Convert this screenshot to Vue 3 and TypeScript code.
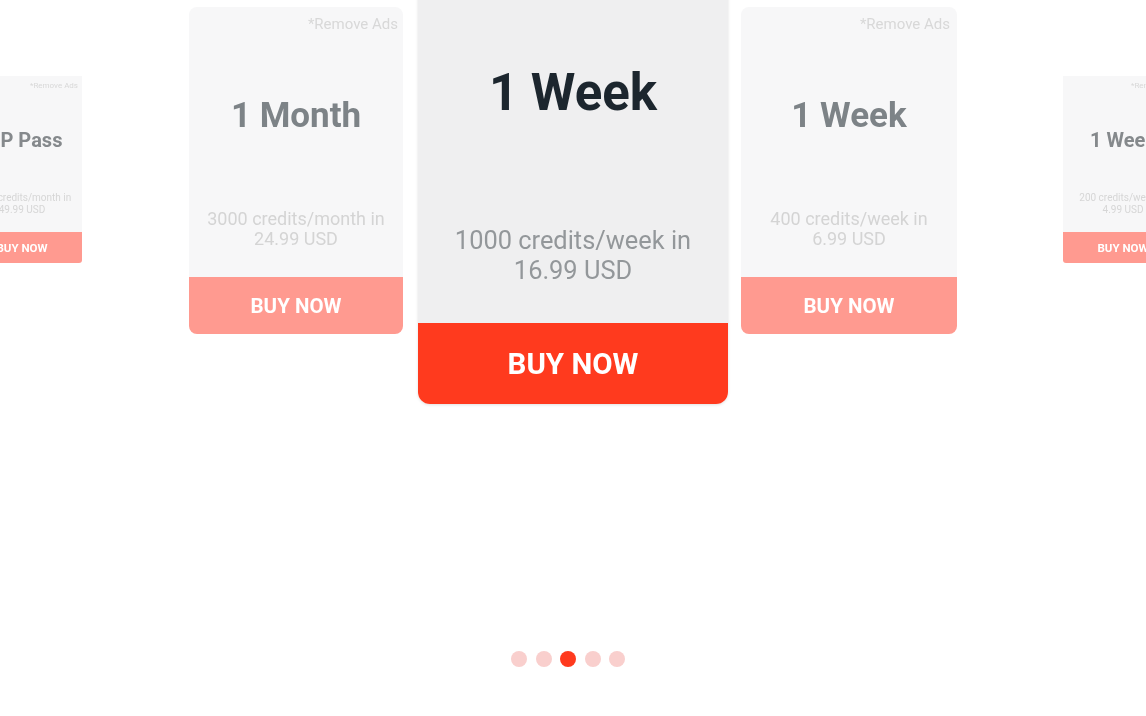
<template>
  <div class="page">
    <div class="track">
      <div v-for="plan in plans" :key="plan.id" class="card" :class="plan.size">
        <div class="card-body">
          <p class="note">*Remove Ads</p>
          <h2 class="title">{{ plan.title }}</h2>
          <p class="desc">{{ plan.credits }}<br>{{ plan.price }}</p>
        </div>
        <div class="buy">BUY NOW</div>
      </div>
    </div>
    <div class="dots">
      <span v-for="n in 5" :key="n" class="dot" :class="{ active: n === 3 }"></span>
    </div>
  </div>
</template>

<script setup lang="ts">
interface Plan {
  id: number
  size: 'small' | 'mid' | 'large'
  title: string
  credits: string
  price: string
}

const plans: Plan[] = [
  { id: 1, size: 'small', title: 'VIP Pass', credits: '6000 credits/month in', price: '49.99 USD' },
  { id: 2, size: 'mid', title: '1 Month', credits: '3000 credits/month in', price: '24.99 USD' },
  { id: 3, size: 'large', title: '1 Week', credits: '1000 credits/week in', price: '16.99 USD' },
  { id: 4, size: 'mid', title: '1 Week', credits: '400 credits/week in', price: '6.99 USD' },
  { id: 5, size: 'small', title: '1 Week', credits: '200 credits/week in', price: '4.99 USD' }
]
</script>

<style>
html, body {
  background: #fff;
}
</style>

<style scoped>
.page {
  width: 1146px;
  height: 716px;
  overflow: hidden;
  font-family: Roboto, "Liberation Sans", sans-serif;
  filter: blur(0.5px);
}

.track {
  display: flex;
  align-items: flex-start;
  height: 651px;
  margin-left: -38px;
}

.card {
  flex-shrink: 0;
  display: flex;
  flex-direction: column;
  overflow: hidden;
}

.card-body {
  text-align: center;
}

.note {
  margin: 0;
  text-align: right;
  white-space: nowrap;
}

.title {
  margin: 0;
  font-weight: 700;
  white-space: nowrap;
}

.desc {
  margin: 0;
  white-space: nowrap;
}

.buy {
  display: flex;
  align-items: center;
  justify-content: center;
  color: #fff;
  font-weight: 700;
}

/* side cards, mostly cut off by the window */
.small {
  width: 120px;
  margin-top: 76px;
  border-radius: 0 0 3px 3px;
}

.small .card-body {
  height: 156px;
  padding: 6px 4px 0;
  box-sizing: border-box;
  background: #f7f7f8;
}

.small .note {
  font-size: 8px;
  line-height: 8px;
  color: #d8d8d8;
}

.small .title {
  margin-top: 38px;
  font-size: 20px;
  line-height: 24px;
  color: #85898c;
}

.small .desc {
  margin-top: 40px;
  font-size: 10px;
  line-height: 12px;
  color: #d6d6d6;
}

.small .buy {
  height: 31px;
  background: #ff9a90;
  font-size: 11.5px;
}

.small:first-child {
  margin-right: 107px;
}

.small:last-child {
  margin-left: 106px;
}

.mid {
  width: 216px;
  margin-top: 7px;
  border-radius: 8px;
}

.mid:nth-child(2) {
  width: 214px;
}

.mid:nth-child(4) .note {
  padding-right: 2px;
}

.mid .card-body {
  height: 270px;
  padding: 10px 5px 0;
  box-sizing: border-box;
  background: #f7f7f8;
}

.mid .note {
  font-size: 15px;
  line-height: 14px;
  color: #d8d8d8;
}

.mid .title {
  margin-top: 65px;
  font-size: 35px;
  line-height: 40px;
  color: #7d8387;
}

.mid .desc {
  margin-top: 73px;
  font-size: 18px;
  line-height: 20px;
  color: #d4d4d4;
}

.mid .buy {
  height: 57px;
  background: #ff9a90;
  font-size: 20.5px;
}

.large {
  width: 310px;
  margin: -70px 13px 0 15px;
  border-radius: 12px;
  box-shadow: 0 1px 3px rgba(0, 0, 0, 0.12);
}

.large .card-body {
  height: 393px;
  padding: 14px 7px 0;
  box-sizing: border-box;
  background: #efeff0;
}

.large .note {
  font-size: 20px;
  line-height: 20px;
  color: #c4c4c4;
}

.large .title {
  margin-top: 99px;
  font-size: 51px;
  line-height: 60px;
  color: #1c262e;
}

.large .desc {
  margin-top: 102px;
  font-size: 25.4px;
  line-height: 30px;
  color: #93979a;
}

.large .buy {
  height: 81px;
  background: #ff3a1e;
  font-size: 29.5px;
}

.dots {
  display: flex;
  justify-content: center;
  gap: 8.5px;
  padding-right: 10px;
}

.dot {
  width: 16px;
  height: 16px;
  border-radius: 50%;
  background: #f9cfcd;
}

.dot.active {
  background: #ff3a1e;
}
</style>
